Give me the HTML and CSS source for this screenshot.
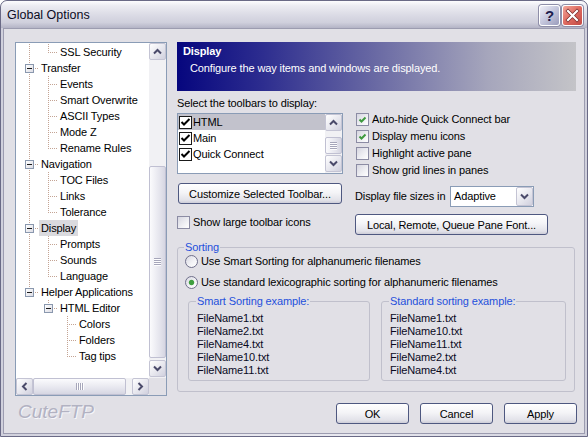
FILE: index.html
```html
<!DOCTYPE html>
<html>
<head>
<meta charset="utf-8">
<title>Global Options</title>
<link rel="stylesheet" href="styles.css">
</head>
<body>
<div class="window">
  <div class="titlebar">
    <span class="title">Global Options</span>
    <div class="tbtns">
      <span class="tbtn help">?</span>
      <span class="tbtn close"><svg width="19" height="19" viewBox="0 0 19 19"><path d="M5 5 L14 14 M14 5 L5 14" stroke="#7a2a2a" stroke-width="3.6" stroke-linecap="square"/><path d="M5 5 L14 14 M14 5 L5 14" stroke="#fff" stroke-width="2.2" stroke-linecap="square"/></svg></span>
    </div>
  </div>
  <div class="client">
    <div class="left">
      <div class="tree">
        <div class="tree-main">
          <div class="tree-body">
            <div class="row"><span class="c v"></span><span class="c l"></span><span class="lbl">SSL Security</span></div>
            <div class="row"><span class="c t"><span class="box"></span></span><span class="lbl">Transfer</span></div>
            <div class="row"><span class="c v"></span><span class="c t"></span><span class="lbl">Events</span></div>
            <div class="row"><span class="c v"></span><span class="c t"></span><span class="lbl">Smart Overwrite</span></div>
            <div class="row"><span class="c v"></span><span class="c t"></span><span class="lbl">ASCII Types</span></div>
            <div class="row"><span class="c v"></span><span class="c t"></span><span class="lbl">Mode Z</span></div>
            <div class="row"><span class="c v"></span><span class="c l"></span><span class="lbl">Rename Rules</span></div>
            <div class="row"><span class="c t"><span class="box"></span></span><span class="lbl">Navigation</span></div>
            <div class="row"><span class="c v"></span><span class="c t"></span><span class="lbl">TOC Files</span></div>
            <div class="row"><span class="c v"></span><span class="c t"></span><span class="lbl">Links</span></div>
            <div class="row"><span class="c v"></span><span class="c l"></span><span class="lbl">Tolerance</span></div>
            <div class="row"><span class="c t"><span class="box"></span></span><span class="lbl sel">Display</span></div>
            <div class="row"><span class="c v"></span><span class="c t"></span><span class="lbl">Prompts</span></div>
            <div class="row"><span class="c v"></span><span class="c t"></span><span class="lbl">Sounds</span></div>
            <div class="row"><span class="c v"></span><span class="c l"></span><span class="lbl">Language</span></div>
            <div class="row"><span class="c l"><span class="box"></span></span><span class="lbl">Helper Applications</span></div>
            <div class="row"><span class="c"></span><span class="c l"><span class="box"></span></span><span class="lbl">HTML Editor</span></div>
            <div class="row"><span class="c"></span><span class="c"></span><span class="c t"></span><span class="lbl">Colors</span></div>
            <div class="row"><span class="c"></span><span class="c"></span><span class="c t"></span><span class="lbl">Folders</span></div>
            <div class="row"><span class="c"></span><span class="c"></span><span class="c l"></span><span class="lbl">Tag tips</span></div>
          </div>
          <div class="vscroll">
            <span class="sbtn"><svg width="9" height="7" viewBox="0 0 9 7"><polyline points="1,5.5 4.5,2 8,5.5" fill="none" stroke="#4a4a6a" stroke-width="2"/></svg></span>
            <span class="track t1"></span>
            <span class="thumb tv"><span class="grip gv"></span></span>
            <span class="track t2"></span>
            <span class="sbtn"><svg width="9" height="7" viewBox="0 0 9 7"><polyline points="1,1.5 4.5,5 8,1.5" fill="none" stroke="#4a4a6a" stroke-width="2"/></svg></span>
          </div>
        </div>
        <div class="hscroll">
          <span class="sbtn"><svg width="7" height="9" viewBox="0 0 7 9"><polyline points="5.5,1 2,4.5 5.5,8" fill="none" stroke="#4a4a6a" stroke-width="2"/></svg></span>
          <span class="thumb th"><span class="grip gh"></span></span>
          <span class="track t3"></span>
          <span class="sbtn"><svg width="7" height="9" viewBox="0 0 7 9"><polyline points="1.5,1 5,4.5 1.5,8" fill="none" stroke="#4a4a6a" stroke-width="2"/></svg></span>
          <span class="corner"></span>
        </div>
      </div>
      <div class="logo">CuteFTP</div>
    </div>

    <div class="right">
      <div class="banner">
        <div class="b-title">Display</div>
        <div class="b-sub">Configure the way items and windows are displayed.</div>
      </div>

      <div class="top">
        <div class="colA">
          <div class="lab">Select the toolbars to display:</div>
          <div class="listbox">
            <div class="lb-items">
              <div class="lb-row on"><span class="lcb"><svg width="11" height="11" viewBox="0 0 11 11"><polyline points="1.5,5 4,7.5 9.5,2" fill="none" stroke="#000" stroke-width="2"/></svg></span><span class="lb-t">HTML</span></div>
              <div class="lb-row"><span class="lcb"><svg width="11" height="11" viewBox="0 0 11 11"><polyline points="1.5,5 4,7.5 9.5,2" fill="none" stroke="#000" stroke-width="2"/></svg></span><span class="lb-t">Main</span></div>
              <div class="lb-row"><span class="lcb"><svg width="11" height="11" viewBox="0 0 11 11"><polyline points="1.5,5 4,7.5 9.5,2" fill="none" stroke="#000" stroke-width="2"/></svg></span><span class="lb-t">Quick Connect</span></div>
            </div>
            <div class="lvscroll">
              <span class="sbtn"><svg width="9" height="7" viewBox="0 0 9 7"><polyline points="1,5.5 4.5,2 8,5.5" fill="none" stroke="#4a4a6a" stroke-width="2"/></svg></span>
              <span class="track t4"></span>
              <span class="thumb tl"><span class="grip gv"></span></span>
              <span class="track t5"></span>
              <span class="sbtn"><svg width="9" height="7" viewBox="0 0 9 7"><polyline points="1,1.5 4.5,5 8,1.5" fill="none" stroke="#4a4a6a" stroke-width="2"/></svg></span>
            </div>
          </div>
          <button class="btn b-cust">Customize Selected Toolbar...</button>
          <div class="chk-row large"><span class="cb"></span><span>Show large toolbar icons</span></div>
        </div>

        <div class="colB">
          <div class="chk-row r"><span class="cb on"><svg width="11" height="11" viewBox="0 0 11 11"><polyline points="2.5,5.5 4.5,7.5 8.5,3.5" fill="none" stroke="#3f9a3f" stroke-width="2"/></svg></span><span>Auto-hide Quick Connect bar</span></div>
          <div class="chk-row r"><span class="cb on"><svg width="11" height="11" viewBox="0 0 11 11"><polyline points="2.5,5.5 4.5,7.5 8.5,3.5" fill="none" stroke="#3f9a3f" stroke-width="2"/></svg></span><span>Display menu icons</span></div>
          <div class="chk-row r"><span class="cb"></span><span>Highlight active pane</span></div>
          <div class="chk-row r"><span class="cb"></span><span>Show grid lines in panes</span></div>
          <div class="sizes">
            <span class="sizes-l">Display file sizes in</span>
            <div class="combo"><span class="combo-t">Adaptive</span><span class="sbtn cbtn"><svg width="9" height="7" viewBox="0 0 9 7"><polyline points="1,1.5 4.5,5 8,1.5" fill="none" stroke="#4a4a6a" stroke-width="2"/></svg></span></div>
          </div>
          <button class="btn b-font">Local, Remote, Queue Pane Font...</button>
        </div>
      </div>

      <fieldset class="group">
        <legend>Sorting</legend>
        <div class="radio-row first"><span class="radio"></span><span>Use Smart Sorting for alphanumeric filenames</span></div>
        <div class="radio-row second"><span class="radio on"></span><span>Use standard lexicographic sorting for alphanumeric filenames</span></div>
        <div class="examples">
          <fieldset class="sub s1">
            <legend>Smart Sorting example:</legend>
            <div class="files">
              <div>FileName1.txt</div>
              <div>FileName2.txt</div>
              <div>FileName4.txt</div>
              <div>FileName10.txt</div>
              <div>FileName11.txt</div>
            </div>
          </fieldset>
          <fieldset class="sub s2">
            <legend>Standard sorting example:</legend>
            <div class="files">
              <div>FileName1.txt</div>
              <div>FileName10.txt</div>
              <div>FileName11.txt</div>
              <div>FileName2.txt</div>
              <div>FileName4.txt</div>
            </div>
          </fieldset>
        </div>
      </fieldset>

      <div class="footer">
        <button class="btn b-foot">OK</button>
        <button class="btn b-foot">Cancel</button>
        <button class="btn b-foot">Apply</button>
      </div>
    </div>
  </div>
</div>
</body>
</html>
```

FILE: styles.css
```css
html, body {
  margin: 0;
  padding: 0;
  background: #ffffff;
}

body {
  font-family: "Liberation Sans", Arial, sans-serif;
  font-size: 11px;
  line-height: 13px;
  letter-spacing: -0.12px;
  color: #000;
}

.window {
  width: 588px;
  height: 437px;
  box-sizing: border-box;
  border: 1px solid #6a6a86;
  border-radius: 7px 7px 0 0;
  background: linear-gradient(to right, #d0d0dc, #e8e8ef 40%, #e8e8ef 60%, #d0d0dc);
  padding: 0 2px 2px;
  display: flex;
  flex-direction: column;
  overflow: hidden;
}

.titlebar {
  height: 27px;
  margin: 0 -2px;
  padding: 2px 4px 0 6px;
  box-sizing: border-box;
  display: flex;
  align-items: center;
  justify-content: space-between;
  background: linear-gradient(#fdfdfe 0%, #ececf2 18%, #dcdce6 50%, #cfcfdc 80%, #b4b4c6 100%);
  border-radius: 6px 6px 0 0;
}

.title {
  font-size: 12.5px;
  color: #0c0c24;
  letter-spacing: 0;
}

.tbtns {
  display: flex;
  gap: 2px;
}

.tbtn {
  width: 21px;
  height: 21px;
  box-sizing: border-box;
  border: 1px solid #ffffff;
  border-radius: 3px;
  box-shadow: 0 0 0 1px #8e8ea8;
  display: flex;
  align-items: center;
  justify-content: center;
}

.help {
  background: linear-gradient(135deg, #f0f0f8, #c4c6dc 50%, #9a9cbc);
  color: #1c1c4c;
  font-size: 15px;
  font-weight: bold;
  font-family: "Liberation Sans", Arial, sans-serif;
}

.close {
  background: linear-gradient(135deg, #f2a69a, #de6a60 50%, #c24a44);
}

.client {
  flex: 1;
  background: #e1e0e6;
  border: 1px solid #9c9cb0;
  display: flex;
  padding: 13px 0 0 11px;
}

/* ---------- left column ---------- */
.left {
  width: 152px;
  flex: none;
  display: flex;
  flex-direction: column;
}

.tree {
  height: 354px;
  box-sizing: border-box;
  border: 1px solid #8a9cb6;
  background: #ffffff;
  display: flex;
  flex-direction: column;
}

.tree-main {
  flex: 1;
  display: flex;
  min-height: 0;
}

.tree-body {
  flex: 1;
  overflow: hidden;
  padding: 1px 0 0 4px;
}

.row {
  display: flex;
  height: 16px;
  line-height: 16px;
  white-space: nowrap;
}

.c {
  width: 19px;
  height: 16px;
  flex: none;
  display: block;
}

.c.v {
  background: repeating-linear-gradient(to bottom, #c4a494 0 1px, transparent 1px 2px) 9px 0 / 1px 16px no-repeat;
}

.c.t {
  background:
    repeating-linear-gradient(to right, #c4a494 0 1px, transparent 1px 2px) 11px 8px / 8px 1px no-repeat,
    repeating-linear-gradient(to bottom, #c4a494 0 1px, transparent 1px 2px) 9px 0 / 1px 16px no-repeat;
}

.c.l {
  background:
    repeating-linear-gradient(to right, #c4a494 0 1px, transparent 1px 2px) 11px 8px / 8px 1px no-repeat,
    repeating-linear-gradient(to bottom, #c4a494 0 1px, transparent 1px 2px) 9px 0 / 1px 9px no-repeat;
}

.box {
  display: block;
  width: 9px;
  height: 9px;
  box-sizing: border-box;
  margin: 4px 0 0 5px;
  border: 1px solid #8a98ae;
  background:
    linear-gradient(#1a1a1a, #1a1a1a) 1px 3px / 5px 1px no-repeat,
    linear-gradient(135deg, #ffffff, #dcdce4);
}

.lbl {
  padding: 0 2px;
  height: 16px;
}

.lbl.sel {
  background: #dadade;
}

/* scrollbars */
.vscroll, .lvscroll {
  width: 17px;
  flex: none;
  display: flex;
  flex-direction: column;
  background: #f1f1f4;
}

.hscroll {
  height: 17px;
  flex: none;
  display: flex;
  background: #f1f1f4;
}

.sbtn {
  width: 17px;
  height: 17px;
  flex: none;
  box-sizing: border-box;
  border: 1px solid #c4c4d4;
  border-radius: 2px;
  background: linear-gradient(135deg, #ffffff, #e4e4ec 60%, #d0d0de);
  display: flex;
  align-items: center;
  justify-content: center;
}

.track {
  flex: none;
  display: block;
}

.t1 { height: 106px; }
.t2 { height: 2px; }
.t3 { width: 6px; }
.t4 { height: 6px; }
.t5 { height: 1px; }

.thumb {
  flex: none;
  box-sizing: border-box;
  border: 1px solid #c0c0d2;
  border-radius: 2px;
  background: linear-gradient(to right, #fbfbfd, #e6e6ee 60%, #d6d6e2);
  display: flex;
  align-items: center;
  justify-content: center;
}

.tv { height: 192px; }
.tl { height: 17px; }

.th {
  width: 93px;
  height: 17px;
  background: linear-gradient(to bottom, #fbfbfd, #e6e6ee 60%, #d6d6e2);
}

.grip.gv {
  display: block;
  width: 7px;
  height: 8px;
  background: repeating-linear-gradient(to bottom, #a6a6ba 0 1px, #fdfdfe 1px 2px);
}

.grip.gh {
  display: block;
  width: 8px;
  height: 7px;
  background: repeating-linear-gradient(to right, #a6a6ba 0 1px, #fdfdfe 1px 2px);
}

.corner {
  width: 17px;
  height: 17px;
  flex: none;
  background: #e1e0e6;
}

.logo {
  margin: 5px 0 0 3px;
  font-size: 19px;
  line-height: 22px;
  font-style: italic;
  letter-spacing: 0;
  color: #b2b2c2;
  text-shadow: 1px 1px 0 #f6f6fa;
}

/* ---------- right column ---------- */
.right {
  width: 400px;
  flex: none;
  margin-left: 10px;
  display: flex;
  flex-direction: column;
}

.banner {
  width: 399px;
  height: 49px;
  box-sizing: border-box;
  padding: 3px 0 0 6px;
  background: linear-gradient(to right, #06067e 0%, #2a2a8e 20%, #6a6aa4 50%, #a6a6bc 78%, #c4c4c8 100%);
  color: #ffffff;
}

.b-title {
  font-weight: bold;
}

.b-sub {
  margin: 4px 0 0 7px;
}

.top {
  display: flex;
  align-items: flex-start;
  margin-top: 6px;
}

.colA {
  width: 166px;
  flex: none;
  display: flex;
  flex-direction: column;
}

.lab {
  height: 13px;
}

.listbox {
  margin-top: 3px;
  height: 61px;
  box-sizing: border-box;
  border: 1px solid #8a9cb6;
  background: #ffffff;
  display: flex;
}

.lb-items {
  flex: 1;
}

.lb-row {
  height: 16px;
  display: flex;
  align-items: center;
  padding-left: 1px;
}

.lb-row.on {
  background: #c2c2cc;
}

.lcb {
  width: 13px;
  height: 13px;
  box-sizing: border-box;
  border: 1px solid #1a1a1a;
  background: #ffffff;
  display: flex;
  align-items: center;
  justify-content: center;
  flex: none;
}

.lb-t {
  margin-left: 1px;
}

.btn {
  font-family: "Liberation Sans", Arial, sans-serif;
  font-size: 11px;
  letter-spacing: -0.12px;
  color: #000;
  height: 21px;
  box-sizing: border-box;
  border: 1px solid #4e5880;
  border-radius: 3px;
  background: linear-gradient(#ffffff 0%, #f4f4f7 45%, #e2e2e9 85%, #cdcdd8 100%);
  padding: 0;
  margin: 0;
  display: flex;
  align-items: center;
  justify-content: center;
}

.b-cust {
  margin-top: 9px;
  width: 164px;
  margin-left: 1px;
}

.chk-row {
  display: flex;
  align-items: center;
  height: 13px;
}

.chk-row.large {
  margin-top: 12px;
}

.cb {
  width: 13px;
  height: 13px;
  box-sizing: border-box;
  border: 1px solid #8c8ca4;
  background: linear-gradient(135deg, #d6d6e0, #f0f0f4 60%, #ffffff);
  display: flex;
  align-items: center;
  justify-content: center;
  flex: none;
  margin-right: 3px;
}

.colB {
  margin-left: 12px;
  padding-top: 14px;
  display: flex;
  flex-direction: column;
}

.chk-row.r {
  height: 17px;
  padding-left: 1px;
}

.sizes {
  display: flex;
  align-items: center;
  margin-top: 7px;
}

.sizes-l {
  width: 95px;
  flex: none;
}

.combo {
  width: 84px;
  height: 21px;
  box-sizing: border-box;
  border: 1px solid #8a9cb6;
  background: #ffffff;
  display: flex;
  align-items: center;
  justify-content: space-between;
}

.combo-t {
  padding-left: 3px;
}

.cbtn {
  height: 19px;
}

.b-font {
  margin-top: 7px;
  width: 193px;
}

fieldset {
  margin: 0;
  border: 1px solid #c0c0cc;
  border-radius: 3px;
  min-width: 0;
}

legend {
  padding: 0 1px;
  line-height: 13px;
  color: #1f50dc;
}

.group {
  width: 398px;
  box-sizing: border-box;
  margin-top: 6px;
  padding: 0 0 10px 6px;
}

.radio-row {
  display: flex;
  align-items: center;
  height: 13px;
}

.radio-row.first { margin-top: 1px; }
.radio-row.second { margin-top: 8px; }

.radio {
  width: 13px;
  height: 13px;
  box-sizing: border-box;
  border: 1px solid #70708c;
  border-radius: 50%;
  background: linear-gradient(135deg, #d8d8e2, #f4f4f7 60%, #ffffff);
  margin: 0 3px 0 1px;
  flex: none;
}

.radio.on {
  background:
    radial-gradient(circle at 50% 50%, #3f9f3f 0 2.2px, #8cc68c 2.6px, transparent 3.2px),
    linear-gradient(135deg, #d8d8e2, #f4f4f7 60%, #ffffff);
}

.examples {
  display: flex;
  gap: 11px;
  margin: 6px 0 0 4px;
}

.sub {
  box-sizing: border-box;
  padding: 0 0 3px 7px;
}

.s1 { width: 182px; }
.s2 { width: 185px; }

.files {
  padding: 4px 0 0 1px;
}

.files div {
  height: 13px;
  color: #0a0a1e;
}

.footer {
  display: flex;
  justify-content: flex-end;
  gap: 11px;
  margin-top: 11px;
}

.b-foot {
  width: 73px;
}
```
